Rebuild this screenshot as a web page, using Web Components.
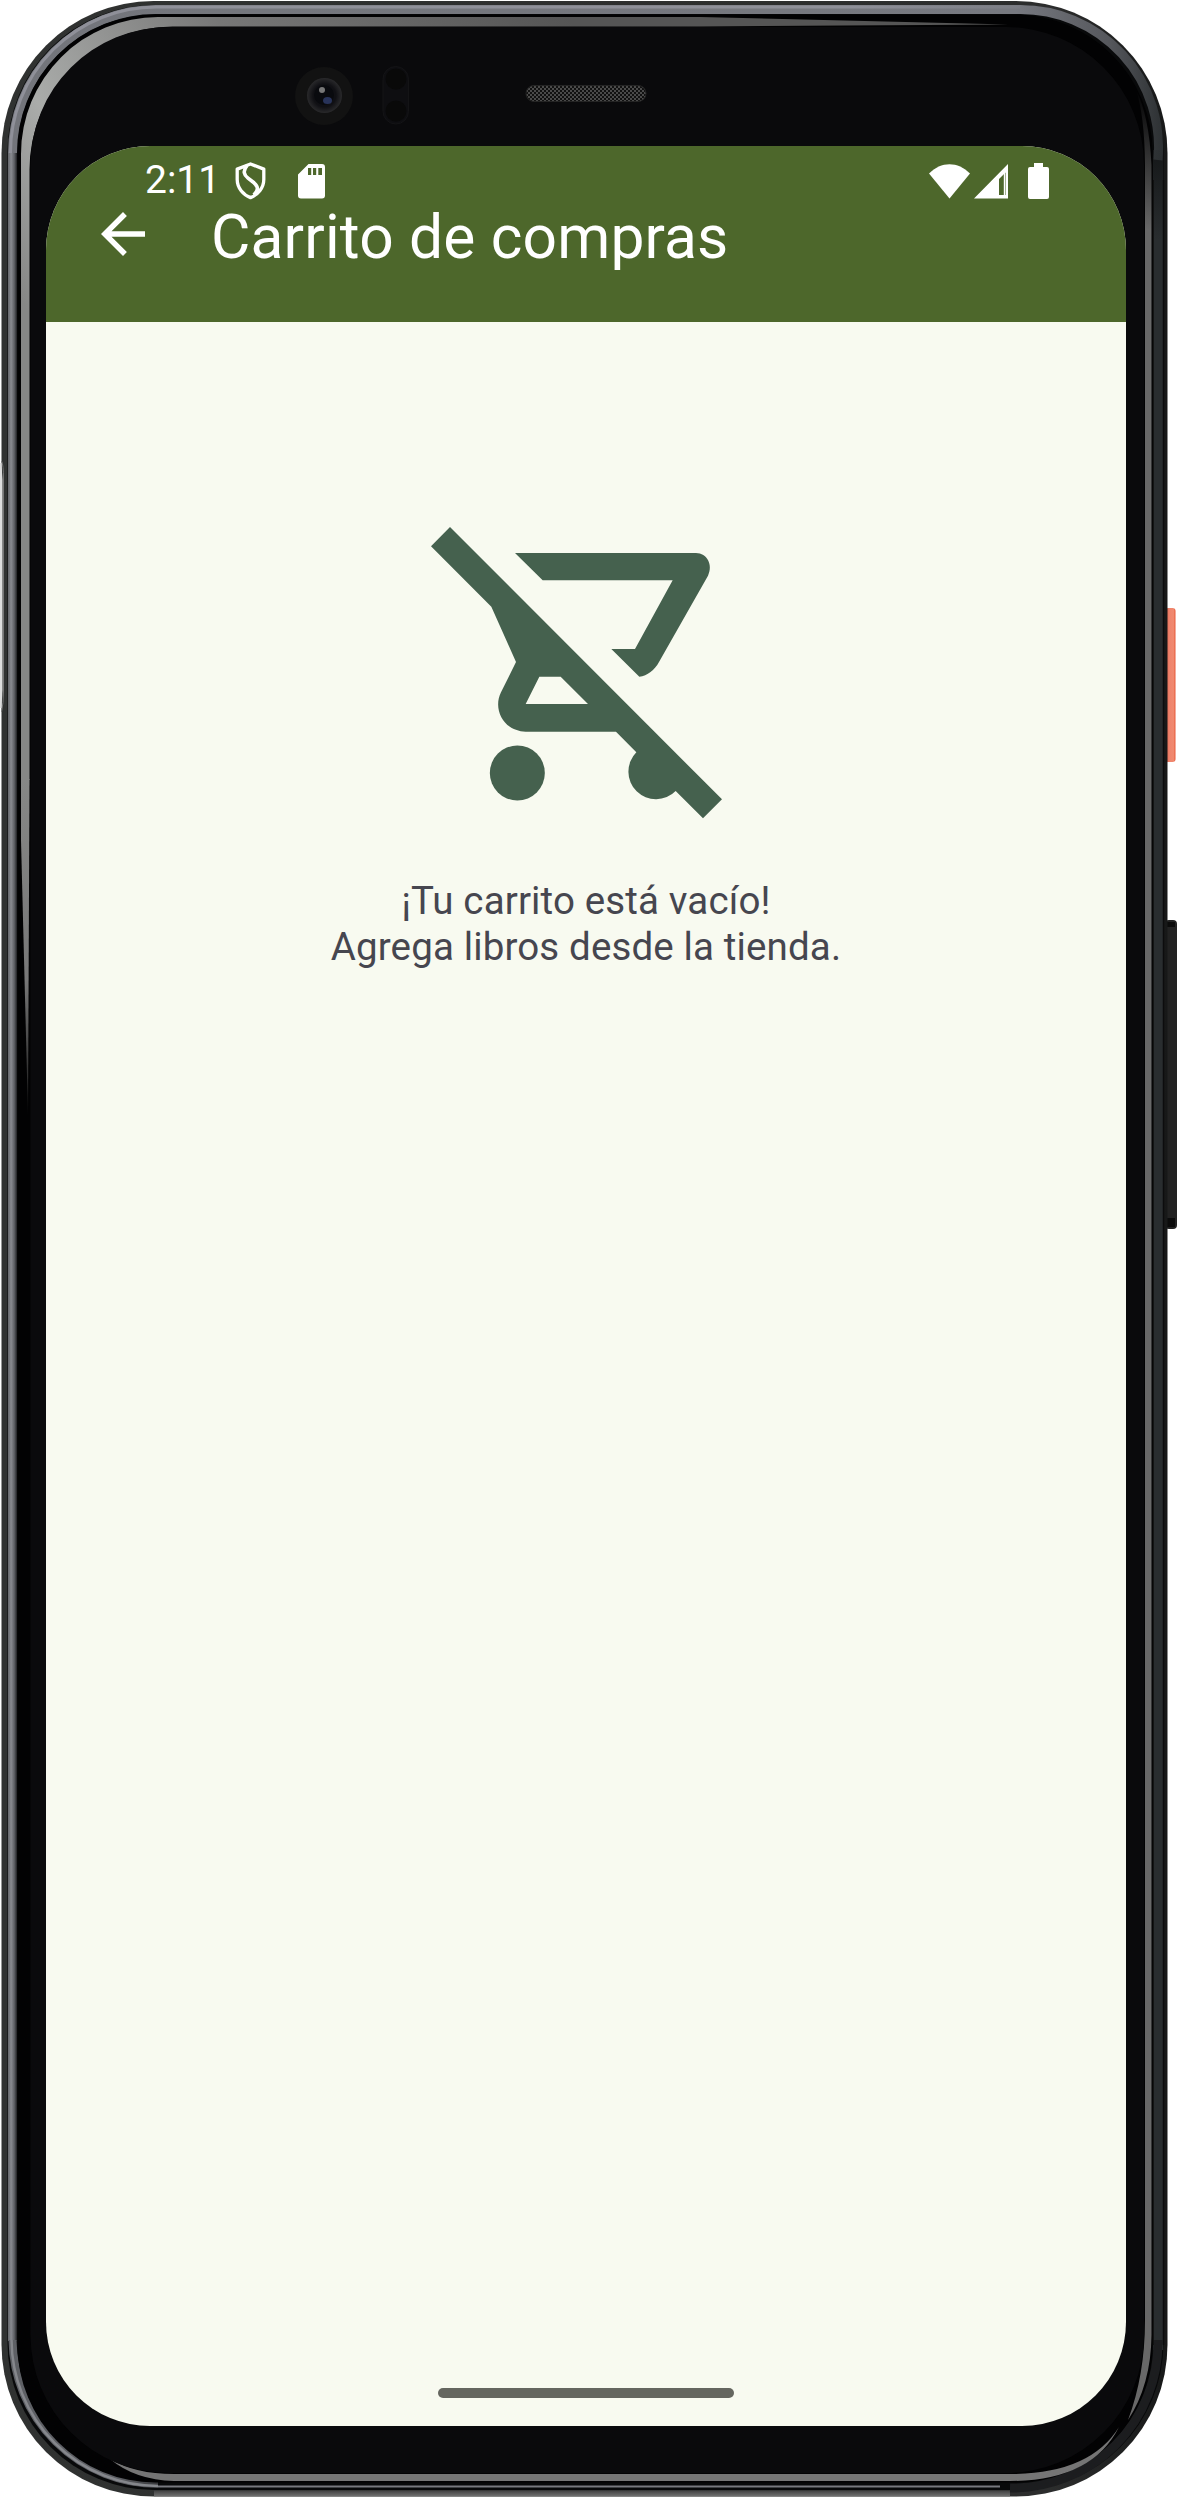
<!DOCTYPE html>
<html lang="es">
<head>
<meta charset="utf-8">
<title>Carrito de compras</title>
<style>
html,body{margin:0;background:#fff}
body{width:1178px;height:2498px;overflow:hidden;font-family:Roboto,sans-serif}
</style>
</head>
<body>
<phone-frame>
  <app-screen>
    <status-bar slot="top" time="2:11"></status-bar>
    <app-bar slot="top">Carrito de compras</app-bar>
    <empty-cart><span>¡Tu carrito está vacío!</span><span>Agrega libros desde la tienda.</span></empty-cart>
  </app-screen>
</phone-frame>
<script>
const define=(name,html)=>customElements.define(name,class extends HTMLElement{
  constructor(){super();this.attachShadow({mode:'open'}).innerHTML=html;}
  connectedCallback(){const t=this.shadowRoot.querySelector('[data-time]');if(t)t.textContent=this.getAttribute('time');}
});

define('status-bar',`<style>
:host{display:flex;align-items:center;justify-content:space-between;height:70px;margin-bottom:-15px;box-sizing:border-box;padding:0 77px 0 99px;color:#fff}
.g{display:flex;align-items:center}
.t{font-size:39px;line-height:46px;width:90px;margin-top:-3px}
svg{display:block;fill:currentColor}
</style>
<div class="g"><span class="t" data-time></span>
<svg width="31" height="38" viewBox="0 0 31 38" style="fill:none;stroke:#fff;stroke-width:3.3;stroke-linejoin:round"><path d="M15.5 2L2.2 7.1V17.5C2.2 26 8.3 32.8 15.5 35.6C22.7 32.8 28.8 26 28.8 17.5V7.1Z"/><path d="M12 3.6C7.5 9 9 13 13 16.2L19 20.8C24 25 23 28.5 18.8 33" stroke-width="3.6"/></svg>
<svg width="27" height="35" viewBox="0 0 27 35" style="margin-left:32px"><path fill-rule="evenodd" d="M10.5 0H24Q27 0 27 3V31.5Q27 34.5 24 34.5H3Q0 34.5 0 31.5V10.5ZM10 4V11H13.2V4ZM15 4V11H18.2V4ZM20.3 4V11H24V4Z"/></svg></div>
<div class="g">
<svg width="41" height="35" viewBox="0 0 41 35"><path d="M0 9.5C12-3 29-3 41 9.5L20.5 34.5Z"/></svg>
<svg width="34" height="35" viewBox="0 0 34 35" style="margin-left:4px"><path fill-rule="evenodd" d="M34 0V34.5H0ZM31.5 8.5L25 15V31H31.5Z"/><path d="M29.8 9.5L31 8.5V31H29.8Z"/></svg>
<svg width="21" height="36" viewBox="0 0 21 36" style="margin-left:20px"><path d="M6 0H15V4H19Q21 4 21 6V34Q21 36 19 36H2Q0 36 0 34V6Q0 4 2 4H6Z"/></svg></div>`);

define('app-bar',`<style>
:host{display:flex;align-items:flex-start;height:121px;padding-left:44px;color:#fff}
svg{display:block;fill:currentColor}
h1{margin:4px 0 0 55px;font-weight:400;font-size:60.5px;line-height:66px;letter-spacing:.16px;white-space:nowrap}
</style>
<svg width="66" height="66" viewBox="0 0 24 24"><path d="M20 11H7.83l5.59-5.59L12 4l-8 8 8 8 1.41-1.41L7.83 13H20v-2z"/></svg>
<h1><slot></slot></h1>`);

define('empty-cart',`<style>
:host{display:flex;flex-direction:column;align-items:center;padding-top:176px}
svg{display:block;fill:#45614e}
p{display:flex;flex-direction:column;align-items:center;margin:50px 0 0;font-size:38.5px;line-height:46px;letter-spacing:.14px;color:#46464f;white-space:nowrap}
</style>
<svg width="330" height="330" viewBox="63 -6 990 990"><path fill-rule="evenodd" d="M150 81L966 898L909 955L827 873A82.5 82.5 0 1 1 709 757L648 695H377C316 695 276 632 303 577L348 486L274 320L93 139ZM418 530L377 612H564L482 530Z"/><path d="M345 159H888C921 159 940 194 924 227L777 486C764 510 742 528 718 530L634 447H705L818 241H428Z"/><circle cx="352" cy="819" r="82.5"/></svg>
<p><slot></slot></p>`);

define('app-screen',`<style>
:host{display:flex;flex-direction:column;width:1080px;height:2280px;border-radius:104px;overflow:hidden;background:#f8faf0}
header{background:#4d672b;height:176px;flex:none}
main{flex:1}
footer{display:flex;justify-content:center;padding-bottom:28px}
i{display:block;width:296px;height:10px;border-radius:5px;background:#65665f}
</style>
<header><slot name="top"></slot></header><main><slot></slot></main><footer><i></i></footer>`);

define('phone-frame',`<style>
:host{display:grid;width:1178px;height:2498px}
svg,.s{grid-area:1/1}
svg{display:block}
.s{padding:146px 0 0 46px;justify-self:start;align-self:start}
</style>
<svg width="1178" height="2498" viewBox="0 0 1178 2498" fill="none">
<defs>
<linearGradient id="body"><stop stop-color="#303231"/><stop offset=".9" stop-color="#2c2d2d"/><stop offset="1" stop-color="#171818"/></linearGradient>
<linearGradient id="rimTop" gradientUnits="userSpaceOnUse" x1="0" x2="1168" y1="0" y2="0"><stop stop-color="#73757b"/><stop offset=".87" stop-color="#777980"/><stop offset=".95" stop-color="#55575c"/><stop offset="1" stop-color="#292d2f"/></linearGradient>
<linearGradient id="rimLine" gradientUnits="userSpaceOnUse" x1="850" x2="1060" y1="0" y2="0"><stop stop-color="#8f9099"/><stop offset="1" stop-color="#8f9099" stop-opacity="0"/></linearGradient>
<linearGradient id="rimSide" gradientUnits="userSpaceOnUse" x1="8" x2="17" y1="0" y2="0"><stop stop-color="#65676b"/><stop offset=".35" stop-color="#888a90"/><stop offset=".7" stop-color="#5e6065"/><stop offset="1" stop-color="#202124"/></linearGradient>
<linearGradient id="rimEnd" gradientUnits="userSpaceOnUse" x1="10" x2="190" y1="0" y2="0"><stop stop-color="#5e6065"/><stop offset=".6" stop-color="#5e6065"/><stop offset="1" stop-color="#1a1a1c"/></linearGradient>
<linearGradient id="glass" gradientUnits="userSpaceOnUse" x1="21" x2="560" y1="300" y2="0"><stop stop-color="#868786"/><stop offset=".18" stop-color="#aaacaa"/><stop offset=".5" stop-color="#777"/><stop offset="1" stop-color="#555"/></linearGradient>
<linearGradient id="fade" x1="0" x2="0" y1="0" y2="1"><stop stop-color="#868786"/><stop offset=".6" stop-color="#777"/><stop offset="1" stop-color="#111"/></linearGradient>
<linearGradient id="orange"><stop stop-color="#d95f48"/><stop offset=".4" stop-color="#ef826b"/><stop offset=".8" stop-color="#f08a70"/><stop offset="1" stop-color="#e85a3a"/></linearGradient>
<linearGradient id="bottom" gradientUnits="userSpaceOnUse" x1="0" x2="0" y1="2489" y2="2497"><stop stop-color="#333"/><stop offset="1" stop-color="#777"/></linearGradient>
<linearGradient id="right" gradientUnits="userSpaceOnUse" x1="0" x2="0" y1="90" y2="240"><stop stop-color="#292d2f" stop-opacity="0"/><stop offset="1" stop-color="#292d2f"/></linearGradient>
<linearGradient id="glassRight" gradientUnits="userSpaceOnUse" x1="0" x2="0" y1="90" y2="230"><stop stop-color="#686868" stop-opacity="0"/><stop offset="1" stop-color="#686868"/></linearGradient>
<pattern id="mesh" width="4" height="4" patternUnits="userSpaceOnUse"><path d="M0 0h4v4H0z" fill="#111"/><path d="M0 0h2v2H0zM2 2h2v2H2z" fill="#4a4a4a"/></pattern>
<radialGradient id="lens"><stop stop-color="#101116"/><stop offset=".65" stop-color="#101014"/><stop offset="1" stop-color="#29292b"/></radialGradient>
</defs>
<rect x="1165" y="608" width="10.500" height="154" rx="3" fill="url(#orange)"/>
<rect x="1165" y="920" width="12" height="309" rx="4" fill="#222"/>
<path d="M1167 922h8v5h-8zM1167 1218h8v9h-8z" fill="#0b0b0b"/>
<rect x="1.5" y="1" width="1166" height="2495.5" rx="152" fill="url(#body)"/>
<path d="M154 2493.5H1010" stroke="url(#bottom)" stroke-width="6"/>
<rect x="7.5" y="5" width="1156" height="2485" rx="147" fill="#08090a"/>
<path d="M8 2341V152H17V2341Z" fill="url(#rimSide)"/>
<path d="M12.5 153A143.5 143.5 0 0 1 156 9.5H1020A138 138 0 0 1 1158 160" stroke="url(#rimTop)" stroke-width="9"/>
<path d="M10.5 153A145.5 145.5 0 0 1 156 7H1020" stroke="url(#rimLine)" stroke-width="3"/>
<path d="M12.5 2340A146 146 0 0 0 158 2486.5H1000" stroke="#77797e" stroke-width="2"/>
<path d="M12.500 2340A146 146 0 0 0 158 2484" stroke="url(#rimEnd)" stroke-width="8"/>
<path d="M11.500 2340A147 147 0 0 0 158 2486" stroke="#85878c" stroke-width="2.500"/>
<path d="M1158 150V2350" stroke="url(#right)" stroke-width="10"/>
<path d="M1158 2340A146 146 0 0 1 1010 2488" stroke="#1c1d1f" stroke-width="9"/>
<path d="M1153 180V2345M1163.5 180V2345" stroke="#0c0c0d" stroke-width="1.5"/>
<rect x="17.5" y="14.5" width="1135" height="2468" rx="138" fill="#020203"/>
<path d="M21 780V154A137 137 0 0 1 158 17H700L1008 24.5L700 26.5H173A143 143 0 0 0 29.5 170V780Z" fill="url(#glass)"/>
<path d="M21 779H29.5L28 1115L21 840Z" fill="url(#fade)"/>
<path d="M1136 90Q1144.500 115 1145 165V2320Q1145 2375 1128 2420Q1151 2385 1151.500 2335V165Q1149 115 1136 90Z" fill="url(#glassRight)"/>
<path d="M110 2459Q135 2474 174 2474H1010Q1090 2474 1119 2427Q1092 2481 1010 2481H174Q135 2480 110 2459Z" fill="#757575"/>
<path d="M30.500 165A138 138 0 0 1 168.500 27H1006A138 138 0 0 1 1144 165V2335A138 138 0 0 1 1006 2473H168.500A138 138 0 0 1 30.500 2335Z" fill="#0a0a0c"/>
<path d="M1.500 461Q3.500 464 3.500 480V690Q3.500 704 1.500 712" stroke="#777" stroke-width="1"/>
<path d="M0 463H1.500L2.500 480V690L1.500 708H0Z" fill="#ddd"/>
<circle cx="324" cy="96" r="29" fill="#121212"/><circle cx="324.5" cy="95.5" r="17.5" fill="url(#lens)"/><circle cx="324" cy="95" r="10" fill="#090a0e"/><circle cx="322" cy="90" r="3" fill="#777"/><ellipse cx="327.500" cy="100.500" rx="4.500" ry="3.500" fill="#28335a"/>
<rect x="383" y="66.500" width="25.500" height="57.500" rx="12.700" fill="#0e0e11" stroke="#141416"/><circle cx="396" cy="79" r="10.5" fill="#090909"/><circle cx="396" cy="111" r="10.5" fill="#090909"/>
<rect x="526" y="85.500" width="120" height="16" rx="8" fill="url(#mesh)" stroke="#242424"/>
</svg>
<div class="s"><slot></slot></div>`);
</script>
</body>
</html>
